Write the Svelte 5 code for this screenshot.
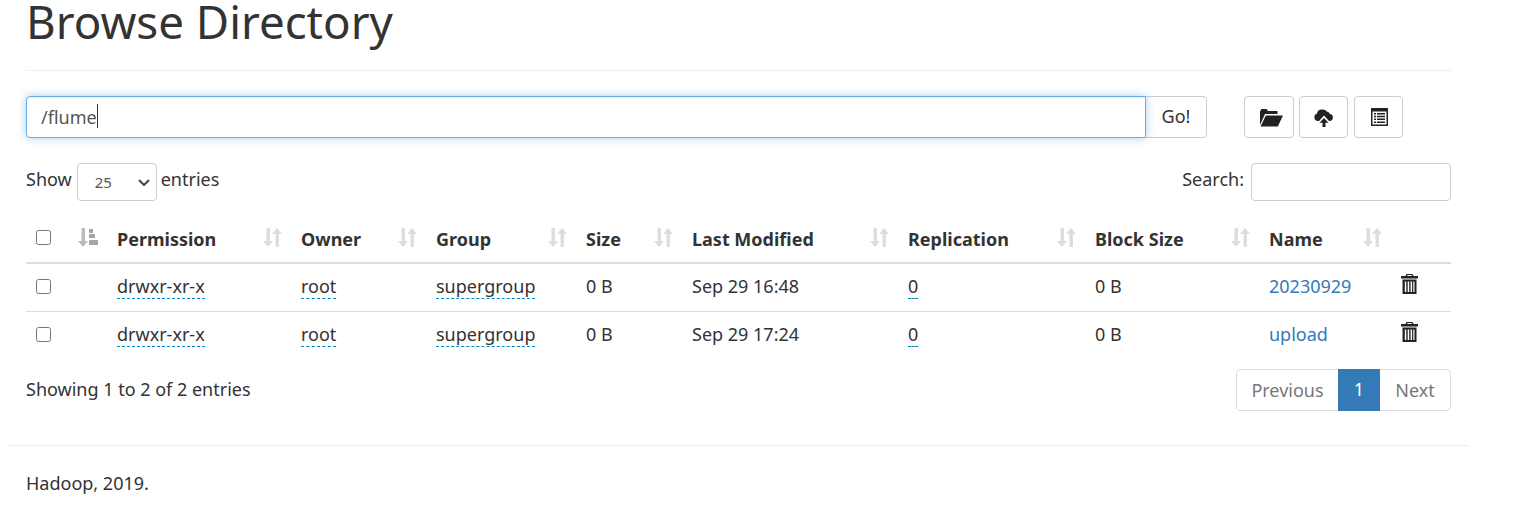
<script>
  const columns = [
    { key: 'check', width: 46 },
    { key: 'order', width: 37, icon: 'attr' },
    { key: 'perm', label: 'Permission', width: 184 },
    { key: 'owner', label: 'Owner', width: 135 },
    { key: 'group', label: 'Group', width: 150 },
    { key: 'size', label: 'Size', width: 106 },
    { key: 'mod', label: 'Last Modified', width: 216 },
    { key: 'rep', label: 'Replication', width: 187 },
    { key: 'block', label: 'Block Size', width: 174 },
    { key: 'name', label: 'Name', width: 132 },
    { key: 'del', width: 58 }
  ]

  const rows = [
    { perm: 'drwxr-xr-x', owner: 'root', group: 'supergroup', size: '0 B', mod: 'Sep 29 16:48', rep: '0', block: '0 B', name: '20230929' },
    { perm: 'drwxr-xr-x', owner: 'root', group: 'supergroup', size: '0 B', mod: 'Sep 29 17:24', rep: '0', block: '0 B', name: 'upload' }
  ]
</script>

{#snippet sortIcon()}
  <svg class="sort" viewBox="0 0 19 19" width="19" height="19" aria-hidden="true">
    <path d="M3.500 0h3.500v13h3l-5 6-5-6h3.500z" />
    <path d="M12.500 19h3.500V6h3l-5-6-5 6h3.500z" />
  </svg>
{/snippet}

{#snippet trash()}
  <svg viewBox="0 0 17 20" width="17" height="20" aria-hidden="true">
    <path
      fill-rule="evenodd"
      d="M5.500 0h6l1 2h4.500v2.500H0V2h4.500zM6.500 1l-.4 1h4.800l-.4-1zM1.500 5.500h14V20h-14zM3.800 7.500V18h1.500V7.500zM6.700 7.500V18h1.500V7.500zM9.600 7.500V18h1.500V7.500zM12.300 7.500V18h1.200V7.500z"
    />
  </svg>
{/snippet}

<div class="page">
  <div class="head">
    <h1>Browse Directory</h1>
  </div>

  <div class="toolbar">
    <div class="path-group">
      <div class="path-wrap">
        <input class="path" type="text" value="/flume" />
        <span class="caret"></span>
      </div>
      <button class="btn go">Go!</button>
    </div>
    <div class="actions">
      <button class="btn icon first" aria-label="Create directory">
        <svg viewBox="0 0 24 19" width="24" height="19">
          <path d="M1 17V3.500L2.500 1h5L9 3h9.500v3H6L1 17z" />
          <path d="M6.800 7.500H24L18.800 18.500H1.500z" />
        </svg>
      </button>
      <button class="btn icon second" aria-label="Upload files">
        <svg viewBox="0 0 20 19" width="20" height="19">
          <path d="M5 13H4A3.800 3.800 0 0 1 3 5.600 4.800 4.800 0 0 1 8 1.500a5 5 0 0 1 4.800 2 3.200 3.200 0 0 1 3 2.400A3.600 3.600 0 0 1 16 13h-1L10 7.500z" />
          <path d="M10 10l4.500 4.800h-3V19h-3v-4.200h-3z" />
        </svg>
      </button>
      <button class="btn icon third" aria-label="Cut and paste">
        <svg viewBox="0 0 17 18" width="17" height="18">
          <path
            fill-rule="evenodd"
            d="M0 0h17v18H0zM1.500 3.500v13h14v-13zM3 5h2v1.500H3zM6 5h8v1.500H6zM3 7.800h2v1.500H3zM6 7.800h8v1.500H6zM3 10.600h2v1.500H3zM6 10.600h8v1.500H6zM3 13.400h2v1.500H3zM6 13.400h8v1.500H6z"
          />
        </svg>
      </button>
    </div>
  </div>

  <div class="controls">
    <label class="length">
      <span class="lbl">Show</span>
      <select>
        <option>25</option>
        <option>50</option>
        <option>100</option>
      </select>
      <span class="lbl">entries</span>
    </label>
    <label class="search">
      <span class="lbl">Search:</span>
      <input type="search" />
    </label>
  </div>

  <table>
    <colgroup>
      {#each columns as col}
        <col style="width: {col.width}px" />
      {/each}
    </colgroup>
    <thead>
      <tr>
        {#each columns as col}
          <th>
            {#if col.key === 'check'}
              <input type="checkbox" />
            {:else if col.icon === 'attr'}
              <svg class="sort active" viewBox="0 0 20 19" width="20" height="19" aria-hidden="true">
                <path d="M3.500 0h3.500v13h3l-5 6-5-6h3.500z" />
                <path class="bars" d="M11 1h4v4h-4zM11 6h6v4h-6zM11 12h9v5h-9z" />
              </svg>
            {:else if col.label}
              {col.label}
              {@render sortIcon()}
            {/if}
          </th>
        {/each}
      </tr>
    </thead>
    <tbody>
      {#each rows as row}
        <tr>
          <td><input type="checkbox" /></td>
          <td></td>
          <td><span class="editable">{row.perm}</span></td>
          <td><span class="editable">{row.owner}</span></td>
          <td><span class="editable">{row.group}</span></td>
          <td>{row.size}</td>
          <td>{row.mod}</td>
          <td><span class="editable">{row.rep}</span></td>
          <td>{row.block}</td>
          <td><a href="#top">{row.name}</a></td>
          <td class="del">{@render trash()}</td>
        </tr>
      {/each}
    </tbody>
  </table>

  <div class="info-row">
    <div class="info">Showing 1 to 2 of 2 entries</div>
    <div class="pager">
      <span class="prev">Previous</span>
      <span class="current">1</span>
      <span class="next">Next</span>
    </div>
  </div>
</div>

<footer>
  <p>Hadoop, 2019.</p>
</footer>

<style>
  :global(body) {
    color: #333;
    font-family: 'Noto Sans', sans-serif;
    font-size: 18px;
    line-height: 1.42857;
    overflow: hidden;
  }

  .page {
    width: 1425px;
    margin-left: 26px;
  }

  .head {
    height: 70px;
    border-bottom: 1px solid #eee;
  }

  h1 {
    margin: 0;
    font-size: 45.7px;
    font-weight: 400;
    line-height: 43px;
  }

  .toolbar {
    display: flex;
    justify-content: space-between;
    margin-top: 25px;
    height: 42px;
    width: 1377px;
  }

  .path-group {
    display: flex;
    width: 1181px;
  }

  .path-wrap {
    position: relative;
    z-index: 1;
    flex: 1;
    min-width: 0;
  }

  .path {
    display: block;
    box-sizing: border-box;
    width: 100%;
    height: 42px;
    padding: 0 14px;
    border: 1px solid #66afe9;
    border-radius: 4px 0 0 4px;
    outline: none;
    box-shadow: inset 0 1px 1px rgba(0, 0, 0, 0.075), 0 0 8px rgba(102, 175, 233, 0.6);
    color: #555;
    font: inherit;
    font-size: 18px;
  }

  .caret {
    position: absolute;
    top: 8px;
    left: 71px;
    width: 1px;
    height: 24px;
    background: #333;
  }

  .btn {
    box-sizing: border-box;
    height: 42px;
    border: 1px solid #ccc;
    border-radius: 4px;
    background: #fff;
    color: #333;
    font: inherit;
    font-size: 18px;
    padding: 0;
  }

  .go {
    width: 62px;
    margin-left: -1px;
    border-radius: 0 4px 4px 0;
  }

  .actions {
    display: flex;
    gap: 5px;
  }

  .icon {
    display: flex;
    align-items: center;
    justify-content: center;
    width: 50px;
  }

  .icon.first {
    padding-left: 3px;
  }

  .icon.second,
  .icon.third {
    width: 49px;
  }

  .icon.second {
    padding-top: 1px;
  }

  .icon.third {
    margin-left: 1px;
    padding-left: 2px;
  }

  .icon svg {
    fill: #222;
  }

  .icon.second svg path:last-child {
    stroke: #fff;
    stroke-width: 1.2;
    paint-order: stroke;
  }

  .controls {
    display: flex;
    justify-content: space-between;
    align-items: center;
    margin-top: 25px;
    height: 38px;
  }

  .length,
  .search {
    display: flex;
    align-items: center;
    gap: 4px;
    font-weight: 400;
  }

  .search {
    gap: 7px;
  }

  .lbl {
    margin-bottom: 4px;
  }

  select {
    appearance: none;
    box-sizing: border-box;
    width: 80px;
    height: 38px;
    margin-left: 1px;
    padding: 1px 20px 0 17px;
    border: 1px solid #ccc;
    border-radius: 4px;
    background: #fff url("data:image/svg+xml,%3Csvg xmlns='http://www.w3.org/2000/svg' width='12' height='7' viewBox='0 0 12 7'%3E%3Cpath d='M1 1l5 5 5-5' fill='none' stroke='%23444' stroke-width='2'/%3E%3C/svg%3E") no-repeat right 6px center;
    color: #555;
    font: inherit;
    font-size: 15px;
  }

  .search input {
    box-sizing: border-box;
    width: 200px;
    height: 38px;
    border: 1px solid #ccc;
    border-radius: 4px;
    outline: none;
    background: #fff;
    font: inherit;
  }

  table {
    width: 1425px;
    margin-top: 15px;
    border-collapse: collapse;
    table-layout: fixed;
  }

  th {
    position: relative;
    height: 47px;
    box-sizing: border-box;
    padding: 9px 8px 7px;
    border-bottom: 2px solid #ddd;
    font-weight: 700;
    text-align: left;
    white-space: nowrap;
  }

  th:first-child {
    padding: 14px 0 0 10px;
    vertical-align: top;
  }

  td:first-child {
    padding: 15px 0 0 10px;
    vertical-align: top;
  }

  td {
    height: 48px;
    box-sizing: border-box;
    padding: 8px;
    border-bottom: 1px solid #ddd;
    white-space: nowrap;
  }

  tbody tr:last-child td {
    border-bottom: none;
  }

  input[type='checkbox'] {
    display: block;
    width: 15px;
    height: 15px;
    margin: 0;
  }

  .sort {
    position: absolute;
    top: 12px;
    right: 11px;
    fill: #ddd;
  }

  .sort.active {
    left: 6px;
    right: auto;
    fill: #bbb;
  }

  .sort .bars {
    fill: #a5a5a5;
  }

  .editable {
    border-bottom: 1px dashed #08c;
  }

  a {
    color: #337ab7;
    text-decoration: none;
  }

  .del {
    padding: 3px 8px 9px;
    color: #222;
  }

  .del svg {
    display: block;
    fill: #222;
  }

  .info-row {
    display: flex;
    justify-content: space-between;
    margin-top: 10px;
    height: 42px;
  }

  .info {
    padding-top: 8px;
  }

  .pager {
    display: flex;
    height: 42px;
    box-sizing: border-box;
    border: 1px solid #ddd;
    border-radius: 4px;
    color: #777;
    line-height: 40px;
  }

  .pager span {
    display: block;
    text-align: center;
  }

  .prev {
    width: 101px;
  }

  .current {
    width: 42px;
    height: 42px;
    margin-top: -1px;
    background: #337ab7;
    color: #fff;
  }

  .next {
    width: 70px;
  }

  footer {
    box-sizing: border-box;
    width: 1461px;
    margin-top: 34px;
    margin-left: 8px;
    border-top: 1px solid #eee;
    padding: 25px 18px 0;
  }

  p {
    margin: 0;
  }
</style>
